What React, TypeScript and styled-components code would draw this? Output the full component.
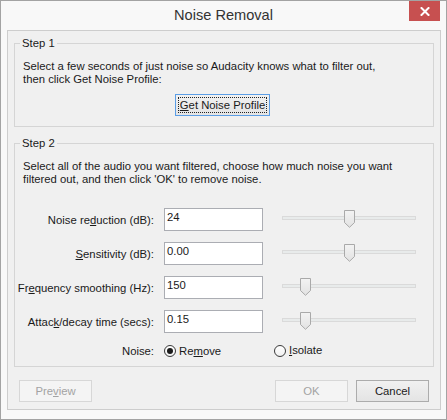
import React from 'react';
import styled, { createGlobalStyle } from 'styled-components';

const GlobalStyle = createGlobalStyle`
  html, body {
    margin: 0;
    padding: 0;
    background: #ffffff;
  }
  body {
    font-family: "Liberation Sans", Arial, sans-serif;
    font-size: 11.3px;
    color: #1a1a1a;
  }
  * {
    box-sizing: border-box;
  }
`;

type Row = {
  label: React.ReactNode;
  value: string;
  pos: number;
};

const rows: Row[] = [
  { label: <>Noise re<u>d</u>uction (dB):</>, value: '24', pos: 0.5 },
  { label: <><u>S</u>ensitivity (dB):</>, value: '0.00', pos: 0.5 },
  { label: <>Fr<u>e</u>quency smoothing (Hz):</>, value: '150', pos: 0.143 },
  { label: <>Attac<u>k</u>/decay time (secs):</>, value: '0.15', pos: 0.143 },
];

const THUMB_W = 11;
const TRACK_W = 134;

function Slider({ pos }: { pos: number }) {
  return (
    <SliderBox>
      <Track />
      <Thumb style={{ left: Math.round(pos * (TRACK_W - THUMB_W)) }} width="11" height="18" viewBox="0 0 11 18">
        <defs>
          <linearGradient id="thumbFill" x1="0" y1="0" x2="0" y2="1">
            <stop offset="0" stopColor="#f3f3f3" />
            <stop offset="1" stopColor="#e2e2e2" />
          </linearGradient>
        </defs>
        <path d="M0.5 0.5 H10.5 V12.5 L5.5 17.3 L0.5 12.5 Z" fill="url(#thumbFill)" stroke="#a9a9a9" strokeWidth="1" />
      </Thumb>
    </SliderBox>
  );
}

function Radio({ checked, children }: { checked?: boolean; children: React.ReactNode }) {
  return (
    <RadioLabel>
      <RadioCircle>{checked && <RadioDot />}</RadioCircle>
      <span>{children}</span>
    </RadioLabel>
  );
}

export default function App() {
  return (
    <>
      <GlobalStyle />
      <Window>
        <TitleBar>
          <span />
          <Title>Noise Removal</Title>
          <CloseBtn>
            <svg width="10" height="9" viewBox="0 0 10 9">
              <path d="M1.5 1 L8.5 8 M8.5 1 L1.5 8" stroke="#ffffff" strokeWidth="2" strokeLinecap="square" />
            </svg>
          </CloseBtn>
        </TitleBar>
        <Client>
          <Group>
            <Legend>Step 1</Legend>
            <Para>
              Select a few seconds of just noise so Audacity knows what to filter out,
              <br />
              then click Get Noise Profile:
            </Para>
            <ProfileRow>
              <Button $focused $width={95}>
                <u>G</u>et Noise Profile
              </Button>
            </ProfileRow>
          </Group>
          <Group $second>
            <Legend>Step 2</Legend>
            <Para>
              Select all of the audio you want filtered, choose how much noise you want
              <br />
              filtered out, and then click 'OK' to remove noise.
            </Para>
            <Grid>
              {rows.map((r, i) => (
                <React.Fragment key={i}>
                  <FieldLabel>{r.label}</FieldLabel>
                  <TextField>{r.value}</TextField>
                  <Slider pos={r.pos} />
                </React.Fragment>
              ))}
              <FieldLabel $small>Noise:</FieldLabel>
              <Radio checked>
                Re<u>m</u>ove
              </Radio>
              <RadioCell>
                <Radio>
                  <u>I</u>solate
                </Radio>
              </RadioCell>
            </Grid>
          </Group>
          <ButtonRow>
            <Button $disabled $width={73}>
              Pre<u>v</u>iew
            </Button>
            <Spacer />
            <Button $disabled $width={73}>
              OK
            </Button>
            <Button $width={73}>Cancel</Button>
          </ButtonRow>
        </Client>
      </Window>
    </>
  );
}

const Window = styled.div`
  width: 447px;
  height: 420px;
  border: 1px solid #a3a3a3;
  background: #f8f8f8;
  display: flex;
  flex-direction: column;
`;

const TitleBar = styled.div`
  height: 29px;
  display: grid;
  grid-template-columns: 1fr auto 1fr;
  align-items: start;
`;

const Title = styled.div`
  font-size: 14.6px;
  line-height: 28px;
  color: #333333;
`;

const CloseBtn = styled.div`
  justify-self: end;
  margin-right: 6px;
  width: 31px;
  height: 20px;
  background: #c75050;
  display: flex;
  align-items: center;
  justify-content: center;
`;

const Client = styled.div`
  flex: 1;
  margin: 0 5px 9px 6px;
  border: 1px solid #cdcdcd;
  background: #f0f0f0;
  padding: 6px 6px 6px;
  display: flex;
  flex-direction: column;
`;

const Group = styled.fieldset<{ $second?: boolean }>`
  margin: ${(p) => (p.$second ? '10px' : '0')} 0 0 0;
  min-width: 0;
  border: 1px solid #d5d5d5;
  padding: 10px 0 ${(p) => (p.$second ? '8px' : '10px')} 0;
`;

const Legend = styled.legend`
  margin-left: 5px;
  padding: 0 2px;
  line-height: 13px;
  color: #1a1a1a;
`;

const Para = styled.p`
  margin: 0 0 0 8px;
  line-height: 13px;
  white-space: nowrap;
`;

const ProfileRow = styled.div`
  margin-top: 8px;
  display: flex;
  justify-content: center;
  padding-right: 3px;
`;

const Button = styled.div<{ $focused?: boolean; $disabled?: boolean; $width: number }>`
  width: ${(p) => p.$width}px;
  height: 22px;
  display: flex;
  align-items: center;
  justify-content: center;
  border: 1px solid ${(p) => (p.$focused ? '#5b9ee6' : p.$disabled ? '#d7d7d7' : '#acacac')};
  background: ${(p) => (p.$disabled ? '#f4f4f4' : 'linear-gradient(#f1f1f1, #e4e4e4)')};
  color: ${(p) => (p.$disabled ? '#a3a3a3' : '#1a1a1a')};
  position: relative;
  outline: ${(p) => (p.$focused ? '1px dotted #222' : 'none')};
  outline-offset: -4px;
`;

const Grid = styled.div`
  margin-top: 22px;
  display: grid;
  grid-template-columns: 140px 99px 144px;
  grid-template-rows: 23px 23px 23px 23px 14px;
  column-gap: 9px;
  row-gap: 11px;
`;

const FieldLabel = styled.div<{ $small?: boolean }>`
  align-self: center;
  text-align: right;
  line-height: 13px;
  white-space: nowrap;
  padding-top: ${(p) => (p.$small ? '0' : '1px')};
  padding-right: 1px;
`;

const TextField = styled.div`
  border: 1px solid #abadb3;
  background: #ffffff;
  padding: 2px 2px 0;
  line-height: 13px;
`;

const SliderBox = styled.div`
  position: relative;
  margin-left: 10px;
  width: ${TRACK_W}px;
  height: 23px;
`;

const Track = styled.div`
  margin-top: 8px;
  height: 4px;
  border: 1px solid #dadada;
  background: #e8ebeb;
`;

const Thumb = styled.svg`
  position: absolute;
  top: 2px;
  display: block;
`;

const RadioCell = styled.div`
  padding-left: 2px;
`;

const RadioLabel = styled.div`
  display: flex;
  align-items: center;
  gap: 3px;
  line-height: 13px;
`;

const RadioCircle = styled.span`
  width: 12px;
  height: 12px;
  border-radius: 50%;
  border: 1px solid #3a3a3a;
  background: linear-gradient(#ffffff, #f0f0f0);
  display: flex;
  align-items: center;
  justify-content: center;
  flex: none;
`;

const RadioDot = styled.span`
  width: 6px;
  height: 6px;
  border-radius: 50%;
  background: #1a1a1a;
`;

const ButtonRow = styled.div`
  margin-top: 13px;
  padding: 0 5px;
  display: flex;
  gap: 8px;
`;

const Spacer = styled.div`
  flex: 1;
`;
